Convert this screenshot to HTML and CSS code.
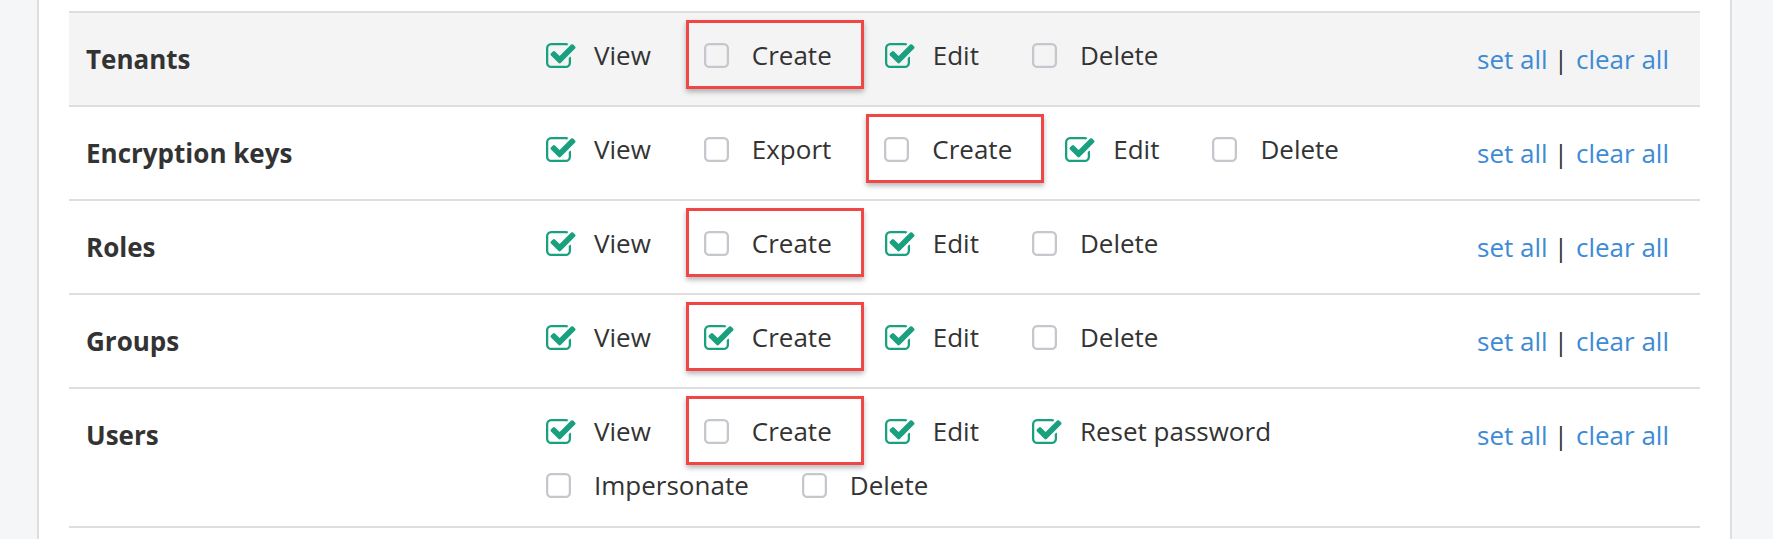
FILE: index.html
```html
<!DOCTYPE html>
<html lang="en">
<head>
  <meta charset="UTF-8" />
  <meta name="viewport" content="width=device-width, initial-scale=1.0" />
  <title>Role permissions</title>
  <link rel="stylesheet" href="styles.css">
</head>
<body>
<svg class="sprite" aria-hidden="true">
  <defs>
    <path id="sq-empty" d="M1120 256h-832q-66 0-113 47t-47 113v832q0 66 47 113t113 47h832q66 0 113-47t47-113v-832q0-66-47-113t-113-47zm288 160v832q0 119-84.5 203.5t-203.5 84.5h-832q-119 0-203.5-84.5t-84.5-203.5v-832q0-119 84.5-203.5t203.5-84.5h832q119 0 203.5 84.5t84.5 203.5z"/>
    <path id="sq-check" d="M1472 930v318q0 119-84.5 203.5t-203.5 84.5h-832q-119 0-203.5-84.5t-84.5-203.5v-832q0-119 84.5-203.5t203.5-84.5h832q63 0 117 25 15 7 18 23 3 17-9 29l-49 49q-10 10-23 10-3 0-9-2-23-6-45-6h-832q-66 0-113 47t-47 113v832q0 66 47 113t113 47h832q66 0 113-47t47-113v-254q0-13 9-22l64-64q10-10 23-10 6 0 12 3 20 8 20 29zm231-489l-814 814q-24 24-57 24t-57-24l-430-430q-24-24-24-57t24-57l110-110q24-24 57-24t57 24l263 263 647-647q24-24 57-24t57 24l110 110q24 24 24 57t-24 57z"/>
  </defs>
</svg>

<main class="panel">
  <div class="perm-table">

    <div class="perm-row shaded">
      <div class="perm-name">Tenants</div>
      <div class="perm-options">
        <label class="opt on"><svg viewBox="64 128 1408 1408"><use href="#sq-check"/></svg>View</label>
        <label class="opt marked"><svg viewBox="0 128 1408 1408"><use href="#sq-empty"/></svg>Create</label>
        <label class="opt on"><svg viewBox="64 128 1408 1408"><use href="#sq-check"/></svg>Edit</label>
        <label class="opt"><svg viewBox="0 128 1408 1408"><use href="#sq-empty"/></svg>Delete</label>
      </div>
      <div class="perm-actions"><a href="#">set all</a><span class="sep">|</span><a href="#">clear all</a></div>
    </div>

    <div class="perm-row">
      <div class="perm-name">Encryption keys</div>
      <div class="perm-options">
        <label class="opt on"><svg viewBox="64 128 1408 1408"><use href="#sq-check"/></svg>View</label>
        <label class="opt"><svg viewBox="0 128 1408 1408"><use href="#sq-empty"/></svg>Export</label>
        <label class="opt marked"><svg viewBox="0 128 1408 1408"><use href="#sq-empty"/></svg>Create</label>
        <label class="opt on"><svg viewBox="64 128 1408 1408"><use href="#sq-check"/></svg>Edit</label>
        <label class="opt"><svg viewBox="0 128 1408 1408"><use href="#sq-empty"/></svg>Delete</label>
      </div>
      <div class="perm-actions"><a href="#">set all</a><span class="sep">|</span><a href="#">clear all</a></div>
    </div>

    <div class="perm-row">
      <div class="perm-name">Roles</div>
      <div class="perm-options">
        <label class="opt on"><svg viewBox="64 128 1408 1408"><use href="#sq-check"/></svg>View</label>
        <label class="opt marked"><svg viewBox="0 128 1408 1408"><use href="#sq-empty"/></svg>Create</label>
        <label class="opt on"><svg viewBox="64 128 1408 1408"><use href="#sq-check"/></svg>Edit</label>
        <label class="opt"><svg viewBox="0 128 1408 1408"><use href="#sq-empty"/></svg>Delete</label>
      </div>
      <div class="perm-actions"><a href="#">set all</a><span class="sep">|</span><a href="#">clear all</a></div>
    </div>

    <div class="perm-row">
      <div class="perm-name">Groups</div>
      <div class="perm-options">
        <label class="opt on"><svg viewBox="64 128 1408 1408"><use href="#sq-check"/></svg>View</label>
        <label class="opt on marked"><svg viewBox="64 128 1408 1408"><use href="#sq-check"/></svg>Create</label>
        <label class="opt on"><svg viewBox="64 128 1408 1408"><use href="#sq-check"/></svg>Edit</label>
        <label class="opt"><svg viewBox="0 128 1408 1408"><use href="#sq-empty"/></svg>Delete</label>
      </div>
      <div class="perm-actions"><a href="#">set all</a><span class="sep">|</span><a href="#">clear all</a></div>
    </div>

    <div class="perm-row">
      <div class="perm-name">Users</div>
      <div class="perm-options">
        <label class="opt on"><svg viewBox="64 128 1408 1408"><use href="#sq-check"/></svg>View</label>
        <label class="opt marked"><svg viewBox="0 128 1408 1408"><use href="#sq-empty"/></svg>Create</label>
        <label class="opt on"><svg viewBox="64 128 1408 1408"><use href="#sq-check"/></svg>Edit</label>
        <label class="opt on"><svg viewBox="64 128 1408 1408"><use href="#sq-check"/></svg>Reset password</label>
        <label class="opt"><svg viewBox="0 128 1408 1408"><use href="#sq-empty"/></svg>Impersonate</label>
        <label class="opt"><svg viewBox="0 128 1408 1408"><use href="#sq-empty"/></svg>Delete</label>
      </div>
      <div class="perm-actions"><a href="#">set all</a><span class="sep">|</span><a href="#">clear all</a></div>
    </div>

  </div>
</main>
</body>
</html>
```

FILE: styles.css
```css
body {
  margin: 0;
  background: #f5f6f8;
  font-family: 'Open Sans', sans-serif;
  color: #333;
}

.sprite {
  position: absolute;
  width: 0;
  height: 0;
}

.panel {
  display: block;
  box-sizing: border-box;
  min-height: 100vh;
  margin: 0 41px 0 37px;
  padding: 11px 30px 0;
  background: #fff;
  border-left: 2px solid #dedede;
  border-right: 2px solid #dedede;
}

.perm-table {
  border-top: 2px solid #dedede;
}

.perm-row {
  display: grid;
  grid-template-columns: 460px 1fr auto;
  padding: 19px 31px 14px 17px;
  border-bottom: 2px solid #dedede;
}

.perm-row.shaded {
  background: #f4f4f4;
}

.perm-name {
  font-size: 26px;
  font-weight: 700;
  line-height: 54px;
  padding-bottom: 5px;
}

.perm-options {
  display: flex;
  flex-wrap: wrap;
  margin-top: -4px;
}

.opt {
  position: relative;
  display: flex;
  align-items: center;
  height: 54px;
  margin-right: 53px;
  font-size: 26px;
  line-height: 32px;
  cursor: pointer;
}

.opt svg {
  width: 25px;
  height: 25px;
  margin-right: 23px;
  overflow: visible;
  fill: #c4c8cc;
}

.opt.on svg {
  fill: #18a07f;
}

/* red call-out frame around the option under review */
.opt.marked::after {
  content: '';
  position: absolute;
  left: -18px;
  right: -32px;
  top: -8px;
  bottom: -7px;
  border: 3px solid #f04646;
  box-shadow: 0 3px 5px rgba(0, 0, 0, 0.28);
}

.perm-actions {
  font-size: 26px;
  line-height: 54px;
}

.perm-actions a {
  color: #3d8bd4;
  text-decoration: none;
}

.perm-actions .sep {
  margin: 0 8px 0 6px;
  color: #333;
}
```
